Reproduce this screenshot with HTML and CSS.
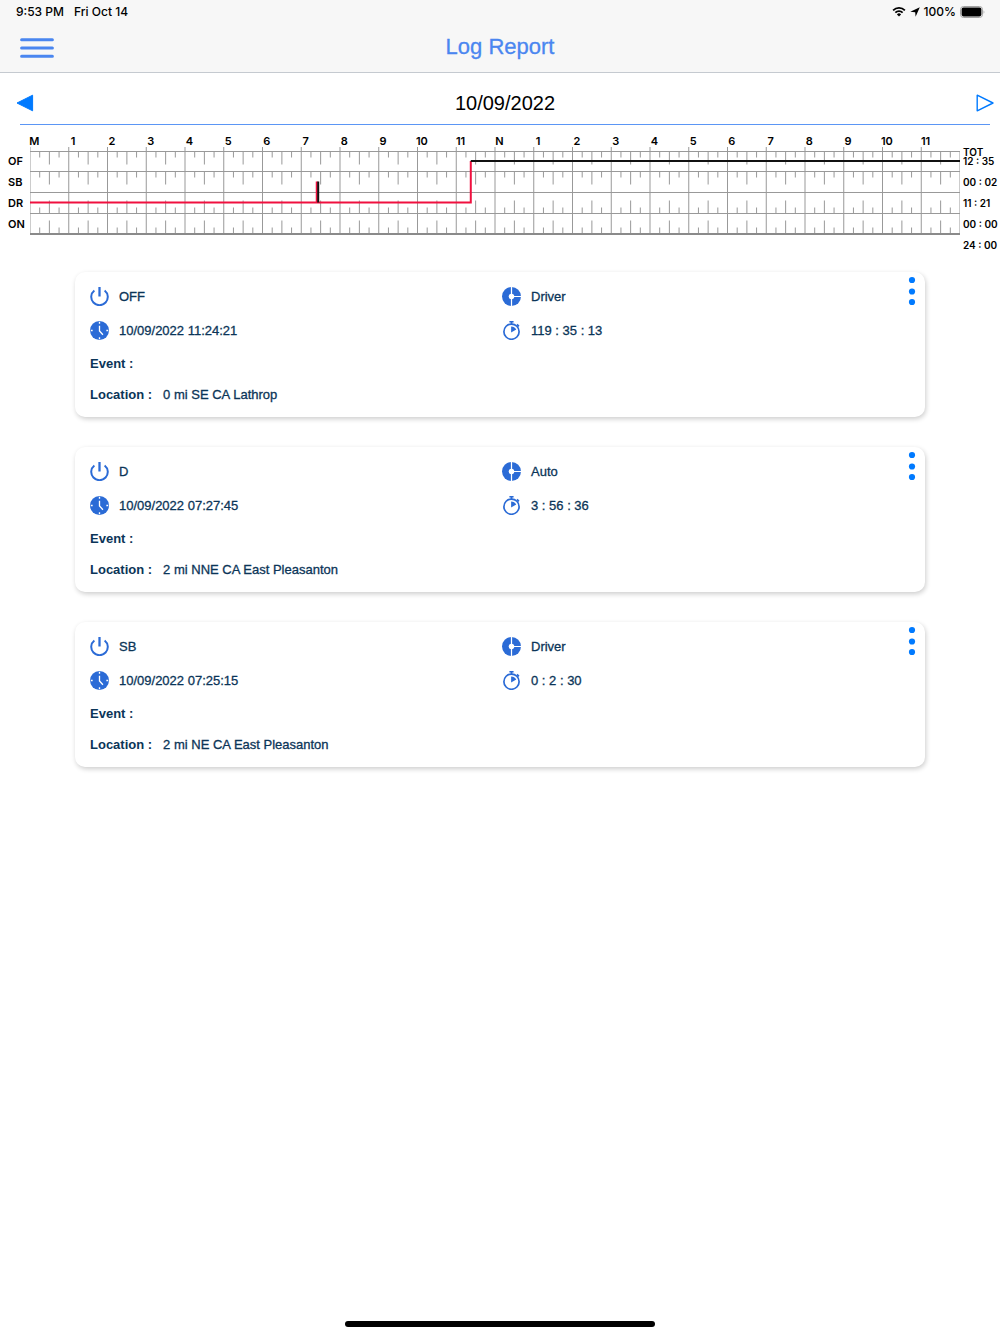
FILE: index.html
```html
<!DOCTYPE html>
<html lang="en">
<head>
  <meta charset="UTF-8" />
  <meta name="viewport" content="width=device-width, initial-scale=1.0"/>
  <title>Log Report</title>
  <link rel="stylesheet" href="styles.css">
</head>
<body>

  <!-- Shared icons -->
  <svg class="icon-defs" aria-hidden="true">
    <symbol id="icon-power" viewBox="0 0 20 20">
      <path d="M4.6 3.6A8.7 8.7 0 1 0 15.4 3.6" fill="none" stroke="currentColor" stroke-width="2.1"/>
      <path d="M10 0V10" fill="none" stroke="currentColor" stroke-width="2.4"/>
    </symbol>
    <symbol id="icon-clock" viewBox="0 0 20 20">
      <circle cx="10" cy="10" r="10" fill="currentColor"/>
      <path d="M10 .8v2M10 17.2v2M.8 10h2M17.2 10h2M10 5v5.6l3.6 3.8" fill="none" stroke="#fff" stroke-width="1.4"/>
    </symbol>
    <symbol id="icon-wheel" viewBox="0 0 20 20">
      <circle cx="10" cy="10" r="10" fill="currentColor"/>
      <path d="M10 0v20M10 10h10" stroke="#fff" stroke-width="1.3"/>
      <circle cx="10" cy="10" r="2.9" fill="#fff"/>
    </symbol>
    <symbol id="icon-timer" viewBox="0 0 20 20">
      <circle cx="10" cy="11.2" r="8" fill="none" stroke="currentColor" stroke-width="1.8"/>
      <path d="M7.8 .8h4.4M10 .8v3M15.8 3.6l2 2" fill="none" stroke="currentColor" stroke-width="1.8"/>
      <path d="M9.6 12V5.8q3.6 0 5.4 3.2z" fill="currentColor"/>
    </symbol>
    <symbol id="icon-dots" viewBox="0 0 8 30">
      <g fill="currentColor">
        <circle cx="4" cy="4" r="3.1"/>
        <circle cx="4" cy="15.5" r="3.1"/>
        <circle cx="4" cy="26" r="3.1"/>
      </g>
    </symbol>
  </svg>

  <header class="header">
    <div class="status-bar">
      <span>9:53 PM</span>
      <span>Fri Oct 14</span>
      <div class="status-right">
        <svg width="14" height="11" viewBox="0 0 15 11" aria-hidden="true">
          <path d="M1.2 4.2a9 9 0 0 1 12.6 0M3.6 6.7a5.5 5.5 0 0 1 7.8 0" fill="none" stroke="#000" stroke-width="1.9"/>
          <path d="M7.5 10.8L5.3 8.6a3.1 3.1 0 0 1 4.4 0z"/>
        </svg>
        <svg width="10" height="10" viewBox="0 0 10 10" aria-hidden="true">
          <path d="M9.8.3L5.6 9.8 5.2 5.2.3 4.8z"/>
        </svg>
        <span>100%</span>
        <svg width="25" height="12" viewBox="0 0 25 12" aria-hidden="true">
          <rect x=".5" y=".5" width="22" height="11" rx="3" fill="none" stroke="#a2a2a2"/>
          <rect x="1.6" y="1.6" width="19.8" height="8.8" rx="1.8"/>
          <path d="M23.6 4.2q1.5 1.8 0 3.6z" fill="#a2a2a2"/>
        </svg>
      </div>
    </div>
    <nav class="nav">
      <button type="button" class="menu-btn" aria-label="Menu">
        <svg width="34" height="22" viewBox="0 0 34 22">
          <path d="M1.6 2.7h30.8M1.6 11h30.8M1.6 19.2h30.8" stroke="currentColor" stroke-width="3" stroke-linecap="round"/>
        </svg>
      </button>
      <h1>Log Report</h1>
    </nav>
  </header>

  <main>
    <!-- Date picker -->
    <div class="date-row">
      <button type="button" aria-label="Previous day">
        <svg width="18" height="18" viewBox="0 0 18 18">
          <path d="M1 9L16.6 1.2v15.6z" fill="currentColor" stroke="currentColor" stroke-linejoin="round"/>
        </svg>
      </button>
      <span>10/09/2022</span>
      <button type="button" aria-label="Next day">
        <svg width="18" height="18" viewBox="0 0 18 18">
          <path d="M17 9L1.2 1.2v15.6z" fill="none" stroke="currentColor" stroke-width="1.4" stroke-linejoin="round"/>
        </svg>
      </button>
    </div>

    <!-- 24 hour duty graph -->
    <section class="graph">
      <div class="hours" id="hours"></div>
      <div class="duty">
        <span>OF</span>
        <span>SB</span>
        <span>DR</span>
        <span>ON</span>
      </div>
      <svg class="plot" viewBox="0 0 960 88" preserveAspectRatio="none" role="img" aria-label="Duty status by hour">
        <path id="gridLines" class="grid-line"/>
        <path class="base-line" d="M0 87H960"/>
        <path class="driving" d="M0 55.5H296V34.5V55.5H455V14"/>
        <path class="resting" d="M297.5 34.5V55.5M455 14H960"/>
      </svg>
      <div class="totals">
        <span class="tot">TOT</span>
        <span>12 : 35</span>
        <span>00 : 02</span>
        <span>11 : 21</span>
        <span>00 : 00</span>
        <span>24 : 00</span>
      </div>
    </section>

    <!-- Log entries -->
    <section class="logs">
      <article class="log-card">
        <div class="cell"><svg class="icon"><use href="#icon-power"/></svg>OFF</div>
        <div class="cell"><svg class="icon"><use href="#icon-wheel"/></svg>Driver</div>
        <div class="cell"><svg class="icon"><use href="#icon-clock"/></svg>10/09/2022 11:24:21</div>
        <div class="cell"><svg class="icon"><use href="#icon-timer"/></svg>119 : 35 : 13</div>
        <div class="line"><strong>Event :</strong></div>
        <div class="line"><strong>Location :</strong><span>0 mi SE CA Lathrop</span></div>
        <button type="button" class="more-btn" aria-label="More options"><svg><use href="#icon-dots"/></svg></button>
      </article>

      <article class="log-card">
        <div class="cell"><svg class="icon"><use href="#icon-power"/></svg>D</div>
        <div class="cell"><svg class="icon"><use href="#icon-wheel"/></svg>Auto</div>
        <div class="cell"><svg class="icon"><use href="#icon-clock"/></svg>10/09/2022 07:27:45</div>
        <div class="cell"><svg class="icon"><use href="#icon-timer"/></svg>3 : 56 : 36</div>
        <div class="line"><strong>Event :</strong></div>
        <div class="line"><strong>Location :</strong><span>2 mi NNE CA East Pleasanton</span></div>
        <button type="button" class="more-btn" aria-label="More options"><svg><use href="#icon-dots"/></svg></button>
      </article>

      <article class="log-card">
        <div class="cell"><svg class="icon"><use href="#icon-power"/></svg>SB</div>
        <div class="cell"><svg class="icon"><use href="#icon-wheel"/></svg>Driver</div>
        <div class="cell"><svg class="icon"><use href="#icon-clock"/></svg>10/09/2022 07:25:15</div>
        <div class="cell"><svg class="icon"><use href="#icon-timer"/></svg>0 : 2 : 30</div>
        <div class="line"><strong>Event :</strong></div>
        <div class="line"><strong>Location :</strong><span>2 mi NE CA East Pleasanton</span></div>
        <button type="button" class="more-btn" aria-label="More options"><svg><use href="#icon-dots"/></svg></button>
      </article>
    </section>
  </main>

  <div class="home-bar"></div>

  <script src="graph.js"></script>
</body>
</html>
```

FILE: styles.css
```css
* {
  box-sizing: border-box;
}
body {
  margin: 0;
  min-height: 100vh;
  display: flex;
  flex-direction: column;
  background: #fff;
  color: #000;
  font-family: "Liberation Sans", Arial, sans-serif;
}
button {
  display: flex;
  padding: 0;
  border: none;
  background: none;
  color: #007aff;
  cursor: pointer;
}
.icon-defs {
  display: none;
}

/* Header */
.header {
  background: #f7f7f7;
  border-bottom: 1px solid #c5cad0;
}
.status-bar {
  display: flex;
  align-items: center;
  gap: 10px;
  height: 23px;
  padding: 0 15px 0 16px;
  font-family: Inter, sans-serif;
  font-size: 12px;
  font-weight: 500;
}
.status-right {
  display: flex;
  align-items: center;
  gap: 4px;
  margin-left: auto;
}
.nav {
  display: grid;
  grid-template-columns: 1fr auto 1fr;
  align-items: center;
  height: 49px;
  padding: 0 20px;
}
.menu-btn {
  color: #4a86f0;
}
h1 {
  margin: 0;
  padding-bottom: 2px;
  color: #4a86f0;
  font-size: 22px;
  font-weight: normal;
  line-height: 26px;
  -webkit-text-stroke: 0.3px;
}

/* Date picker */
.date-row {
  display: flex;
  align-items: center;
  justify-content: space-between;
  height: 51px;
  padding: 8px 6px 0 16px;
  font-size: 20px;
}
.date-row span {
  padding-top: 2px;
}

/* Graph */
.graph {
  display: grid;
  grid-template-columns: 22px 1fr 37px;
  column-gap: 3px;
  margin-left: 5px;
  font-family: Inter, sans-serif;
  font-size: 11px;
  font-weight: 600;
}
.graph::before {
  content: "";
  grid-column: 1 / -1;
  height: 1px;
  margin: 0 10px 0 15px;
  background: #5b96f5;
}
.hours {
  grid-column: 2;
  display: grid;
  grid-template-columns: repeat(24, 1fr);
  margin: 10px 15px 0 -15px;
  line-height: 12px;
  text-align: center;
}
.duty {
  grid-column: 1;
  display: flex;
  flex-direction: column;
  padding: 4px 0 0 3px;
  line-height: 21px;
}
.plot {
  width: 100%;
  height: 88px;
}
.plot path {
  fill: none;
  vector-effect: non-scaling-stroke;
}
.plot .grid-line {
  stroke: #999;
  stroke-width: 1;
}
.plot .base-line {
  stroke: #8a8a8a;
  stroke-width: 2;
}
.plot .driving {
  stroke: #f0103f;
  stroke-width: 2;
}
.plot .resting {
  stroke: #111;
  stroke-width: 2;
}
.totals {
  display: flex;
  flex-direction: column;
  font-size: 10px;
  line-height: 21px;
  white-space: nowrap;
}
.tot {
  height: 4px;
  line-height: 10px;
}

/* Log cards */
.logs {
  display: flex;
  flex-direction: column;
  gap: 30px;
  width: 85%;
  margin: 16px auto 30px;
}
.log-card {
  position: relative;
  display: grid;
  grid-template-columns: 1fr 1fr;
  grid-template-rows: 34px 34px 32px 31px;
  align-items: center;
  padding: 7px 11px 7px 15px;
  border-radius: 10px;
  background: #fff;
  box-shadow: 1px 2px 5px rgba(0, 0, 0, 0.2);
  color: #0b3558;
  font-size: 13px;
}
.cell {
  display: flex;
  align-items: center;
  gap: 10px;
  -webkit-text-stroke: 0.3px;
}
.icon {
  width: 19px;
  height: 19px;
  color: #2b6bd6;
}
.line {
  grid-column: 1 / -1;
  display: flex;
  gap: 11px;
}
.line span {
  -webkit-text-stroke: 0.3px;
}
.more-btn {
  position: absolute;
  top: 4px;
  right: 9px;
}
.more-btn svg {
  width: 8px;
  height: 30px;
}

.home-bar {
  width: 31%;
  height: 6px;
  margin: auto auto 7px;
  border-radius: 3px;
  background: #000;
}
```

FILE: graph.js
```js
const hourNames = ["M", 1, 2, 3, 4, 5, 6, 7, 8, 9, 10, 11, "N", 1, 2, 3, 4, 5, 6, 7, 8, 9, 10, 11];
document.getElementById("hours").innerHTML = hourNames.map(h => `<span>${h}</span>`).join("");

// Each hour is 40 units wide, quarter hour ticks every 10
const rows = [4.5, 24.5, 45.5, 66.5];
let d = rows.map(y => `M0 ${y}H960`).join("");

for (let hour = 0; hour <= 24; hour++) {
  const x = hour * 40;
  d += `M${x} ${hour === 24 ? 4 : 0}V87`;
  if (hour === 24) break;

  for (let q = 1; q < 4; q++) {
    const len = q === 2 ? 13 : 6;
    // OF and SB hang from the top, DR and ON stand on the bottom
    [4.5, 24.5].forEach(y => d += `M${x + q * 10} ${y}v${len}`);
    [66.5, 86.5].forEach(y => d += `M${x + q * 10} ${y}v${-len}`);
  }
}

document.getElementById("gridLines").setAttribute("d", d);
```
